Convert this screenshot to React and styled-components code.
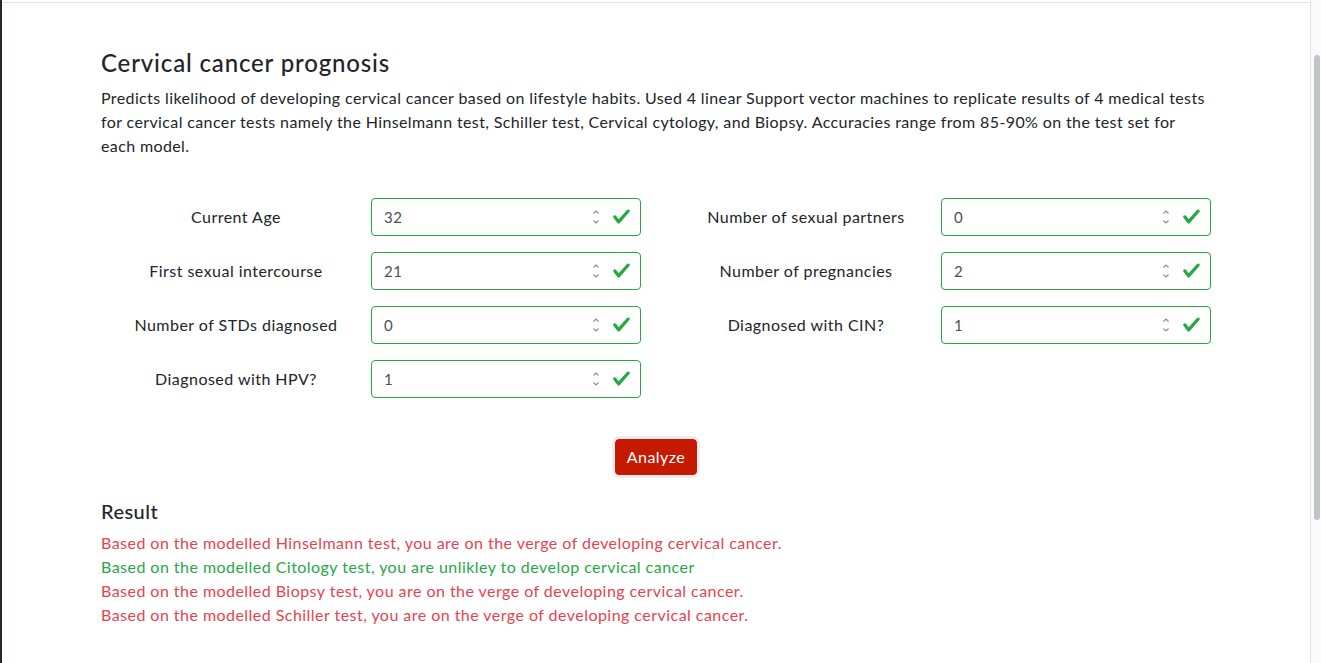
import styled, { createGlobalStyle } from "styled-components";

const GlobalStyle = createGlobalStyle`
  html, body {
    margin: 0;
    padding: 0;
    background: #fff;
    overflow: hidden;
  }
  body {
    font-family: Lato, "Open Sans", sans-serif;
    letter-spacing: 0.46px;
    color: #212529;
  }
`;

const Frame = styled.div`
  display: flex;
  height: 663px;
  background: #fff;
`;

const LeftEdge = styled.div`
  width: 2px;
  background: #2b2430;
`;

const Main = styled.div`
  flex: 1;
  border-top: 1px solid #e2e2e2;
  margin-top: 2px;
`;

const Scrollbar = styled.div`
  width: 11px;
  border-left: 1px solid #e3e3e3;
  background: #fafafa;
  padding: 55px 3px 0 3px;
  box-sizing: border-box;
`;

const Thumb = styled.div`
  width: 6px;
  height: 465px;
  border-radius: 3px;
  background: #c3c4c8;
`;

const Container = styled.div`
  width: 1140px;
  margin: 0 auto;
  padding: 46px 15px 0;
  box-sizing: border-box;
`;

const Title = styled.h4`
  font-size: 24px;
  font-weight: 500;
  letter-spacing: 0.85px;
  line-height: 1.2;
  margin: 0 0 8px;
`;

const Lead = styled.p`
  font-size: 16px;
  line-height: 24px;
  letter-spacing: 0.38px;
  margin: 0 0 40px;
`;

const FormGrid = styled.div`
  display: grid;
  grid-template-columns: 1fr 1fr;
  column-gap: 30px;
  row-gap: 16px;
`;

const Field = styled.div`
  display: grid;
  grid-template-columns: 270px 270px;
  align-items: center;
`;

const Label = styled.label`
  text-align: center;
  font-size: 16px;
`;

const InputBox = styled.div`
  height: 38px;
  box-sizing: border-box;
  border: 1px solid #28a745;
  border-radius: 4px;
  display: flex;
  align-items: center;
  padding: 0 9px 0 12px;
`;

const Value = styled.input`
  flex: 1;
  min-width: 0;
  border: none;
  outline: none;
  background: transparent;
  font-family: inherit;
  letter-spacing: inherit;
  font-size: 15px;
  color: #495057;
  padding: 0;
`;

const Spin = styled.svg`
  width: 8px;
  height: 18px;
  margin-right: 12px;
`;

const Check = styled.svg`
  width: 19px;
  height: 19px;
`;

const Actions = styled.div`
  display: flex;
  justify-content: center;
  margin: 41px 0 24px;
`;

const Button = styled.button`
  background: #c41a00;
  color: #fff;
  border: 1px solid #c41a00;
  border-radius: 4px;
  font-family: inherit;
  letter-spacing: inherit;
  font-size: 16px;
  height: 36px;
  padding: 0 11px;
  box-shadow: 0 0 0 3px #ececec;
  cursor: pointer;
`;

const ResultTitle = styled.h5`
  font-size: 20px;
  font-weight: 500;
  line-height: 1.2;
  margin: 0 0 8px;
`;

const ResultLine = styled.div`
  font-size: 16px;
  line-height: 24px;
  color: ${(props) => (props.good ? "#28a745" : "#e8424f")};
`;

const fields = [
  ["Current Age", "32"],
  ["Number of sexual partners", "0"],
  ["First sexual intercourse", "21"],
  ["Number of pregnancies", "2"],
  ["Number of STDs diagnosed", "0"],
  ["Diagnosed with CIN?", "1"],
  ["Diagnosed with HPV?", "1"],
];

const results = [
  ["Based on the modelled Hinselmann test, you are on the verge of developing cervical cancer.", false],
  ["Based on the modelled Citology test, you are unlikley to develop cervical cancer", true],
  ["Based on the modelled Biopsy test, you are on the verge of developing cervical cancer.", false],
  ["Based on the modelled Schiller test, you are on the verge of developing cervical cancer.", false],
];

const NumberField = ({ label, value }) => (
  <Field>
    <Label>{label}</Label>
    <InputBox>
      <Value type="text" readOnly value={value} />
      <Spin viewBox="0 0 8 18">
        <path d="M1.5 5.5 L4 3 L6.5 5.5" fill="none" stroke="#8a8a8a" strokeWidth="1.1" />
        <path d="M1.5 12.5 L4 15 L6.5 12.5" fill="none" stroke="#8a8a8a" strokeWidth="1.1" />
      </Spin>
      <Check viewBox="0 0 8 8">
        <path
          fill="#28a745"
          d="M2.3 6.73L.6 4.53c-.4-1.04.46-1.4 1.1-.8l1.1 1.4 3.4-3.8c.6-.63 1.6-.27 1.2.7l-4 4.6c-.43.5-.8.4-1.1.1z"
        />
      </Check>
    </InputBox>
  </Field>
);

const App = () => {
  return (
    <Frame>
      <GlobalStyle />
      <LeftEdge />
      <Main>
        <Container>
          <Title>Cervical cancer prognosis</Title>
          <Lead>
            Predicts likelihood of developing cervical cancer based on lifestyle habits. Used 4 linear
            Support vector machines to replicate results of 4 medical tests for cervical cancer tests
            namely the Hinselmann test, Schiller test, Cervical cytology, and Biopsy. Accuracies range
            from 85-90% on the test set for each model.
          </Lead>
          <FormGrid>
            {fields.map(([label, value]) => (
              <NumberField key={label} label={label} value={value} />
            ))}
          </FormGrid>
          <Actions>
            <Button>Analyze</Button>
          </Actions>
          <ResultTitle>Result</ResultTitle>
          {results.map(([text, good]) => (
            <ResultLine key={text} good={good}>
              {text}
            </ResultLine>
          ))}
        </Container>
      </Main>
      <Scrollbar>
        <Thumb />
      </Scrollbar>
    </Frame>
  );
};

export default App;
